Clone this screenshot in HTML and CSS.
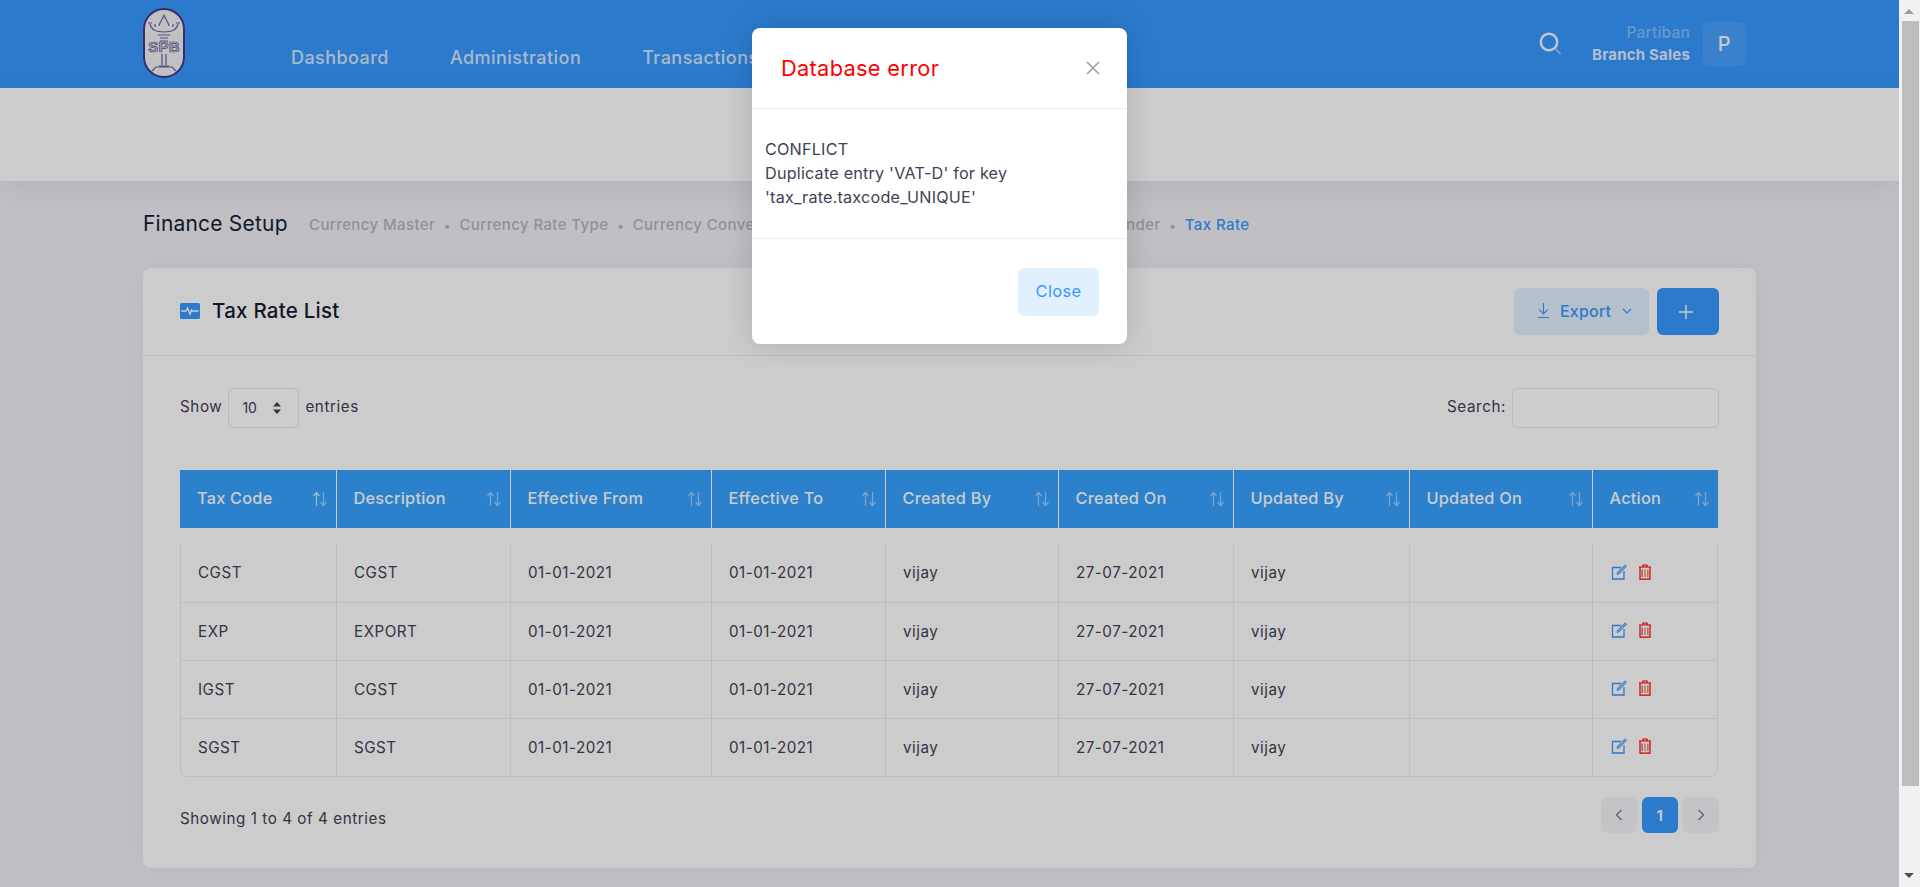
FILE: index.html
```html
<!DOCTYPE html>
<html lang="en">
<head>
<meta charset="utf-8">
<title>Tax Rate</title>
<link rel="stylesheet" href="styles.css">
</head>
<body>
<div class="app">
  <header class="topbar">
    <svg class="logo" viewBox="0 0 42 70" aria-label="SPB logo">
      <rect x="1" y="1" width="40" height="68" rx="20" fill="#f2f2f6" stroke="#4a3584" stroke-width="2"/>
      <g fill="none" stroke="#6f5f9a" stroke-width="1.200">
        <path d="M16 18c1-5 4-7 5-11 1 4 4 6 5 11"/>
        <path d="M7 16c1 6 6 8 14 8s13-2 14-8"/>
        <path d="M5 15h4M33 15h4M12 19v-3M30 19v-3"/>
        <path d="M15 27h12M17 30h8M17 33h8"/>
        <path d="M19 46v11M23 46v11M16 58h10M9 63l4-4h16l4 4"/>
      </g>
      <text x="21" y="44" class="logo-text">SPB</text>
    </svg>
    <nav class="mainnav">
      <a class="navlink">Dashboard</a>
      <a class="navlink">Administration</a>
      <a class="navlink">Transactions</a>
    </nav>
    <div class="userbox">
      <svg class="searchicon" viewBox="0 0 24 24" fill="none">
        <circle cx="10" cy="10" r="8.200" stroke="#fff" stroke-opacity=".95" stroke-width="2.400"/>
        <path d="M16.500 17l5 5" stroke="#fff" stroke-opacity=".45" stroke-width="2"/>
      </svg>
      <div class="usertext">
        <span class="username">Partiban</span>
        <span class="userrole">Branch Sales</span>
      </div>
      <div class="avatar">P</div>
    </div>
  </header>
  <div class="subheader"></div>
  <main class="content">
    <div class="crumbbar">
      <h2 class="pagetitle">Finance Setup</h2>
      <ul class="crumbs">
        <li>Currency Master</li>
        <li>Currency Rate Type</li>
        <li>Currency Conversion</li>
        <li>Bank Master</li>
        <li>Pay Terms</li>
        <li>Payment Tender</li>
        <li class="crumb-active">Tax Rate</li>
      </ul>
    </div>
    <section class="card">
      <div class="cardhead">
        <div class="cardtitle">
          <svg class="pulse" viewBox="0 0 20 16"><rect width="20" height="16" rx="1.500" fill="#3699ff"/><path d="M1 8h5l1.500-3 2.500 6 1.500-4 1 1h6" fill="none" stroke="#fff" stroke-width="1.400"/></svg>
          <h3>Tax Rate List</h3>
        </div>
        <div class="cardtools">
          <button class="btn btn-light">
            <svg class="ico14" viewBox="0 0 16 18" fill="none" stroke="currentColor" stroke-width="1.200"><path d="M8 1v11M3.500 8L8 12.500 12.500 8M2 16.500h12"/></svg>
            Export
            <svg class="ico10" viewBox="0 0 10 6" fill="none" stroke="currentColor" stroke-width="1.200"><path d="M1 1l4 4 4-4"/></svg>
          </button>
          <button class="btn btn-primary" aria-label="Add">
            <svg class="ico16" viewBox="0 0 16 16" fill="none" stroke="currentColor" stroke-width="1.500"><path d="M8 1v14M1 8h14"/></svg>
          </button>
        </div>
      </div>
      <div class="cardbody">
        <div class="dtcontrols">
          <label class="dtlength">Show
            <span class="select">10
              <svg class="updown" viewBox="0 0 10 12" fill="#3f4254"><path d="M5 0l4 4.500H1zM5 12l4-4.500H1z"/></svg>
            </span>
            entries</label>
          <label class="dtsearch">Search: <span class="searchinput"></span></label>
        </div>
        <table class="grid gridhead">
          <colgroup><col class="c1"><col class="c2"><col class="c3"><col class="c4"><col class="c5"><col class="c6"><col class="c7"><col class="c8"><col class="c9"></colgroup>
          <thead>
            <tr>
              <th><div class="th"><span>Tax Code</span><svg class="sort sort-asc" viewBox="0 0 16 16"><path class="up" d="M4.500 15V2M1.500 5l3-3.500 3 3.500"/><path class="down" d="M11.500 1v13M8.500 11l3 3.500 3-3.500"/></svg></div></th>
              <th><div class="th"><span>Description</span><svg class="sort" viewBox="0 0 16 16"><path class="up" d="M4.500 15V2M1.500 5l3-3.500 3 3.500"/><path class="down" d="M11.500 1v13M8.500 11l3 3.500 3-3.500"/></svg></div></th>
              <th><div class="th"><span>Effective From</span><svg class="sort" viewBox="0 0 16 16"><path class="up" d="M4.500 15V2M1.500 5l3-3.500 3 3.500"/><path class="down" d="M11.500 1v13M8.500 11l3 3.500 3-3.500"/></svg></div></th>
              <th><div class="th"><span>Effective To</span><svg class="sort" viewBox="0 0 16 16"><path class="up" d="M4.500 15V2M1.500 5l3-3.500 3 3.500"/><path class="down" d="M11.500 1v13M8.500 11l3 3.500 3-3.500"/></svg></div></th>
              <th><div class="th"><span>Created By</span><svg class="sort" viewBox="0 0 16 16"><path class="up" d="M4.500 15V2M1.500 5l3-3.500 3 3.500"/><path class="down" d="M11.500 1v13M8.500 11l3 3.500 3-3.500"/></svg></div></th>
              <th><div class="th"><span>Created On</span><svg class="sort" viewBox="0 0 16 16"><path class="up" d="M4.500 15V2M1.500 5l3-3.500 3 3.500"/><path class="down" d="M11.500 1v13M8.500 11l3 3.500 3-3.500"/></svg></div></th>
              <th><div class="th"><span>Updated By</span><svg class="sort" viewBox="0 0 16 16"><path class="up" d="M4.500 15V2M1.500 5l3-3.500 3 3.500"/><path class="down" d="M11.500 1v13M8.500 11l3 3.500 3-3.500"/></svg></div></th>
              <th><div class="th"><span>Updated On</span><svg class="sort" viewBox="0 0 16 16"><path class="up" d="M4.500 15V2M1.500 5l3-3.500 3 3.500"/><path class="down" d="M11.500 1v13M8.500 11l3 3.500 3-3.500"/></svg></div></th>
              <th><div class="th"><span>Action</span><svg class="sort" viewBox="0 0 16 16"><path class="up" d="M4.500 15V2M1.500 5l3-3.500 3 3.500"/><path class="down" d="M11.500 1v13M8.500 11l3 3.500 3-3.500"/></svg></div></th>
            </tr>
          </thead>
        </table>
        <div class="gridbodywrap">
        <table class="grid gridbody">
          <colgroup><col class="c1"><col class="c2"><col class="c3"><col class="c4"><col class="c5"><col class="c6"><col class="c7"><col class="c8"><col class="c9"></colgroup>
          <tbody>
            <tr><td>CGST</td><td>CGST</td><td>01-01-2021</td><td>01-01-2021</td><td>vijay</td><td>27-07-2021</td><td>vijay</td><td></td><td><div class="acts"><svg class="edit" viewBox="0 0 16 16" fill="none"><path d="M10 3.500H1.500v11.500H13V7" stroke="#3699ff" stroke-width="1.300"/><path d="M6 10.500l.6-2.500L14 .8l1.600 1.500L8.300 9.800z" fill="#8fbdf2" stroke="#3699ff" stroke-width=".8"/></svg><svg class="trash" viewBox="0 0 14 16" fill="none"><path d="M1 3h12M5 3V1h4v2M2 3v12.200h10V3" stroke="#f00" stroke-width="1.200"/><path d="M4.200 5.500v7.500" stroke="#f26a8d" stroke-width="1.600"/><path d="M7 5.500v7.500" stroke="#f0a050" stroke-width="1.600"/><path d="M9.800 5.500v7.500" stroke="#e7857c" stroke-width="1.600"/></svg></div></td></tr>
            <tr><td>EXP</td><td>EXPORT</td><td>01-01-2021</td><td>01-01-2021</td><td>vijay</td><td>27-07-2021</td><td>vijay</td><td></td><td><div class="acts"><svg class="edit" viewBox="0 0 16 16" fill="none"><path d="M10 3.500H1.500v11.500H13V7" stroke="#3699ff" stroke-width="1.300"/><path d="M6 10.500l.6-2.500L14 .8l1.600 1.500L8.300 9.800z" fill="#8fbdf2" stroke="#3699ff" stroke-width=".8"/></svg><svg class="trash" viewBox="0 0 14 16" fill="none"><path d="M1 3h12M5 3V1h4v2M2 3v12.200h10V3" stroke="#f00" stroke-width="1.200"/><path d="M4.200 5.500v7.500" stroke="#f26a8d" stroke-width="1.600"/><path d="M7 5.500v7.500" stroke="#f0a050" stroke-width="1.600"/><path d="M9.800 5.500v7.500" stroke="#e7857c" stroke-width="1.600"/></svg></div></td></tr>
            <tr><td>IGST</td><td>CGST</td><td>01-01-2021</td><td>01-01-2021</td><td>vijay</td><td>27-07-2021</td><td>vijay</td><td></td><td><div class="acts"><svg class="edit" viewBox="0 0 16 16" fill="none"><path d="M10 3.500H1.500v11.500H13V7" stroke="#3699ff" stroke-width="1.300"/><path d="M6 10.500l.6-2.500L14 .8l1.600 1.500L8.300 9.800z" fill="#8fbdf2" stroke="#3699ff" stroke-width=".8"/></svg><svg class="trash" viewBox="0 0 14 16" fill="none"><path d="M1 3h12M5 3V1h4v2M2 3v12.200h10V3" stroke="#f00" stroke-width="1.200"/><path d="M4.200 5.500v7.500" stroke="#f26a8d" stroke-width="1.600"/><path d="M7 5.500v7.500" stroke="#f0a050" stroke-width="1.600"/><path d="M9.800 5.500v7.500" stroke="#e7857c" stroke-width="1.600"/></svg></div></td></tr>
            <tr><td>SGST</td><td>SGST</td><td>01-01-2021</td><td>01-01-2021</td><td>vijay</td><td>27-07-2021</td><td>vijay</td><td></td><td><div class="acts"><svg class="edit" viewBox="0 0 16 16" fill="none"><path d="M10 3.500H1.500v11.500H13V7" stroke="#3699ff" stroke-width="1.300"/><path d="M6 10.500l.6-2.500L14 .8l1.600 1.500L8.300 9.800z" fill="#8fbdf2" stroke="#3699ff" stroke-width=".8"/></svg><svg class="trash" viewBox="0 0 14 16" fill="none"><path d="M1 3h12M5 3V1h4v2M2 3v12.200h10V3" stroke="#f00" stroke-width="1.200"/><path d="M4.200 5.500v7.500" stroke="#f26a8d" stroke-width="1.600"/><path d="M7 5.500v7.500" stroke="#f0a050" stroke-width="1.600"/><path d="M9.800 5.500v7.500" stroke="#e7857c" stroke-width="1.600"/></svg></div></td></tr>
          </tbody>
        </table>
        </div>
        <div class="dtfoot">
          <span class="dtinfo">Showing 1 to 4 of 4 entries</span>
          <div class="pager">
            <span class="page page-off"><svg class="chev" viewBox="0 0 8 12" fill="none" stroke="#7e8299" stroke-width="1.500"><path d="M6.500 1L1.500 6l5 5"/></svg></span>
            <span class="page page-on">1</span>
            <span class="page page-off"><svg class="chev" viewBox="0 0 8 12" fill="none" stroke="#7e8299" stroke-width="1.500"><path d="M1.500 1l5 5-5 5"/></svg></span>
          </div>
        </div>
      </div>
    </section>
  </main>
  <div class="backdrop"></div>
  <div class="modal" role="dialog">
    <div class="modalhead">
      <h4>Database error</h4>
      <svg class="modalx" viewBox="0 0 14 14" fill="none" stroke="#9a9ca8" stroke-width="1.500"><path d="M1 1l12 12M13 1L1 13"/></svg>
    </div>
    <div class="modalbody">CONFLICT<br>Duplicate entry 'VAT-D' for key<br>'tax_rate.taxcode_UNIQUE'</div>
    <div class="modalfoot"><button class="btn btn-close">Close</button></div>
  </div>
</div>
<div class="scrollbar">
  <span class="arrow arrow-up"></span>
  <span class="thumb"></span>
  <span class="arrow arrow-down"></span>
</div>
</body>
</html>
```
FILE: styles.css
```css
* { box-sizing: border-box; }
html, body { height: 100%; margin: 0; overflow: hidden; }
body {
  display: flex;
  background: #fff;
  font-family: Inter, "Liberation Sans", sans-serif;
  font-size: 15.2px;
  letter-spacing: .5px;
  color: #3f4254;
}
h2, h3, h4 { margin: 0; font-weight: 500; }
.app { position: relative; width: 1899px; height: 887px; overflow: hidden; background: #f0f0f6; flex: none; }

.topbar { height: 88px; background: #3699ff; display: flex; padding: 0 153px 0 143px; position: relative; }
.logo { width: 42px; height: 70px; margin-top: 8px; flex: none; }
.logo-text { font: 700 15px "Liberation Sans", sans-serif; fill: #d6d3de; stroke: #5a4a90; stroke-width: .7; text-anchor: middle; letter-spacing: .3px; }
.mainnav { display: flex; gap: 61px; margin-left: 106px; padding-top: 47px; }
.navlink { font-size: 18px; font-weight: 500; color: rgba(255,255,255,.8); line-height: 22px; letter-spacing: .45px; white-space: nowrap; }
.userbox { margin-left: auto; display: flex; align-items: center; height: 88px; }
.searchicon { width: 24px; height: 24px; margin-right: 29px; }
.usertext { display: flex; flex-direction: column; align-items: flex-end; line-height: 22px; font-size: 15px; letter-spacing: .2px; }
.username { color: rgba(255,255,255,.4); font-weight: 500; font-size: 15.500px; }
.userrole { color: rgba(255,255,255,.85); font-weight: 700; }
.avatar { width: 43px; height: 44px; margin-left: 13px; border-radius: 6px; background: rgba(255,255,255,.1); display: flex; align-items: center; justify-content: center; color: #fff; font-size: 20px; font-weight: 500; opacity: .95; }

.subheader { height: 93px; background: #fff; box-shadow: 0 10px 30px rgba(82,63,105,.08); position: relative; }
.content { padding: 0 143px; }
.crumbbar { display: flex; align-items: center; height: 87px; padding-bottom: 3px; }
.pagetitle { font-size: 21px; font-weight: 400; letter-spacing: .2px; color: #181c32; width: 166px; white-space: nowrap; }
.crumbs { list-style: none; margin: 0; padding: 2px 0 0; display: flex; font-size: 15px; font-weight: 500; letter-spacing: .4px; color: #b5b5c3; white-space: nowrap; }
.crumbs li + li::before { content: "•"; margin: 0 8.700px; font-size: 12px; }
.crumb-active { color: #3699ff; }
.crumbs .crumb-active::before { color: #b5b5c3; }

.card { width: 1613px; height: 600px; background: #fff; border-radius: 8px; box-shadow: 0 0 30px rgba(82,63,105,.05); }
.cardhead { height: 88px; border-bottom: 1px solid #ebedf3; display: flex; align-items: flex-start; justify-content: space-between; padding: 20px 37px 0 37px; }
.cardtitle { display: flex; align-items: center; gap: 12px; height: 45px; }
.cardtitle h3 { font-size: 20.5px; font-weight: 500; letter-spacing: .25px; color: #181c32; }
.pulse { width: 20px; height: 16px; }
.cardtools { display: flex; gap: 8px; }
.btn { border: 0; border-radius: 6px; font: 500 16px Inter, "Liberation Sans", sans-serif; letter-spacing: .2px; display: flex; align-items: center; justify-content: center; height: 47px; }
.btn-light { width: 135px; background: #e1f0ff; color: #3699ff; gap: 9px; justify-content: flex-start; padding: 0 0 2px 22px; }
.btn-primary { width: 62px; background: #3699ff; color: #fff; padding: 0 5px 0 0; }
.ico14 { width: 15px; height: 17px; }
.ico10 { width: 10px; height: 6px; margin-left: 2px; }
.ico16 { width: 16px; height: 16px; }
.cardbody { padding: 32px 37px 0 37px; }
.dtcontrols { display: flex; justify-content: space-between; align-items: center; height: 40px; }
.dtlength, .dtsearch { display: flex; align-items: flex-start; gap: 6px; letter-spacing: .6px; line-height: 38px; }
.select { width: 71px; height: 40px; border: 1px solid #e4e6ef; border-radius: 6px; display: flex; align-items: center; justify-content: space-between; padding: 0 16px 0 13px; font-size: 14px; letter-spacing: 0; }
.updown { width: 10px; height: 12px; }
.searchinput { display: block; width: 207px; height: 40px; border: 1px solid #e4e6ef; border-radius: 6px; }

.grid { border-collapse: collapse; table-layout: fixed; width: 1538px; }
.c1 { width: 156px; } .c2 { width: 174px; } .c3 { width: 201px; } .c4 { width: 174px; } .c5 { width: 173px; }
.c6 { width: 175px; } .c7 { width: 176px; } .c8 { width: 183px; } .c9 { width: 126px; }
.gridhead { margin-top: 42px; background: #36a2ff; color: #fff; }
.gridhead th { height: 58px; padding: 0 8px 2px 17px; text-align: left; font-size: 16.300px; font-weight: 500; letter-spacing: .25px; border-left: 1px solid #fff; }
.gridhead th:first-child { border-left: 0; }
.th { display: flex; align-items: center; justify-content: space-between; }
.sort { width: 16px; height: 16px; margin-top: 2px; fill: none; stroke-width: 1.200; }
.sort .up, .sort .down { stroke: rgba(255,255,255,.5); }
.sort-asc .up { stroke: #b8f8ff; }
.gridbodywrap { margin-top: 17px; width: 1538px; height: 232px; border: 1px solid #ebedf3; border-top: 0; border-radius: 0 0 8px 8px; overflow: hidden; }
.gridbody { margin-left: -1px; }
.gridbody td { height: 58px; padding: 0 17px; border-left: 1px solid #ebedf3; border-top: 1px solid #ebedf3; }
.gridbody tr:first-child td { border-top: 0; height: 57px; padding-bottom: 1px; }
.acts { display: flex; align-items: center; gap: 11px; margin: -2px 0 0 1px; }
.edit { width: 16px; height: 16px; }
.trash { width: 14px; height: 16px; }

.dtfoot { display: flex; justify-content: space-between; align-items: center; margin-top: 20px; width: 1539px; height: 36px; }
.dtinfo { padding-top: 7px; letter-spacing: .56px; }
.pager { display: flex; gap: 5px; }
.page { width: 36px; height: 36px; border-radius: 6px; display: flex; align-items: center; justify-content: center; font-weight: 600; }
.page-off { background: #f5f6f9; }
.page-on { background: #3699ff; color: #fff; }
.chev { width: 8px; height: 12px; }

.backdrop { position: absolute; inset: 0; background: rgba(0,0,0,.2); }
.modal { position: absolute; left: 752px; top: 28px; width: 375px; height: 316px; background: #fff; border-radius: 8px; box-shadow: 0 0 30px rgba(0,0,0,.15); display: flex; flex-direction: column; }
.modalhead { height: 81px; border-bottom: 1px solid #ebedf3; display: flex; align-items: center; justify-content: space-between; padding: 0 27px 0 29px; flex: none; }
.modalhead h4 { color: #f00; font-size: 21.800px; font-weight: 400; letter-spacing: .3px; }
.modalx { width: 14px; height: 14px; }
.modalbody { height: 130px; flex: none; border-bottom: 1px solid #ebedf3; padding: 28px 13px 0; font-size: 16.200px; letter-spacing: .2px; line-height: 24px; }
.modalfoot { flex: 1; display: flex; justify-content: flex-end; align-items: flex-start; padding: 29px 28px 0 0; }
.btn-close { width: 81px; height: 48px; padding-bottom: 3px; background: #e1f0ff; color: #3699ff; font-size: 16.500px; font-weight: 400; letter-spacing: .3px; }

.scrollbar { flex: none; width: 21px; height: 887px; background: #f1f1f1; display: flex; flex-direction: column; align-items: center; position: relative; padding: 21px 1px 0 3px; }
.thumb { display: block; width: 17px; height: 765px; background: #bdbdbd; }
.arrow { position: absolute; width: 0; height: 0; border-left: 5px solid transparent; border-right: 5px solid transparent; left: 5px; }
.arrow-up { top: 9px; border-bottom: 5px solid #9f9f9f; }
.arrow-down { bottom: 9px; border-top: 5px solid #505050; }
```
